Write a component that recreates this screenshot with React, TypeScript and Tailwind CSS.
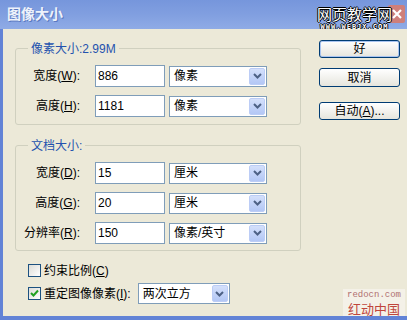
import React from 'react';

const font = "font-['Liberation_Sans','Noto_Sans_CJK_SC',sans-serif]";

const Chevron = () => (
  <svg width="9" height="6" viewBox="0 0 9 6">
    <path d="M1 1 L4.5 4.5 L8 1" fill="none" stroke="#4d6185" strokeWidth="2" />
  </svg>
);

const Select: React.FC<{ value: string; w: string }> = ({ value, w }) => (
  <div className={`${w} h-[21px] flex items-center border border-[#7f9db9] bg-white`}>
    <span className="flex-1 pl-[4px] leading-none">{value}</span>
    <div className="w-[16px] h-[17px] mr-[1px] flex items-center justify-center rounded-[2px] bg-gradient-to-b from-[#d4e0fb] to-[#b3c7f5] border border-[#bccdf6]">
      <Chevron />
    </div>
  </div>
);

const Row: React.FC<{ label: React.ReactNode; value: string; unit: string }> = ({ label, value, unit }) => (
  <div className="flex items-center h-[22px]">
    <div className="w-[64px] text-right">{label}</div>
    <div className="ml-[15px] w-[70px] h-[22px] border border-[#7f9db9] bg-white flex items-center pl-[2px]">{value}</div>
    <div className="ml-[4px]">
      <Select value={unit} w="w-[98px]" />
    </div>
  </div>
);

const Button: React.FC<{ children: React.ReactNode; main?: boolean; h: string; mt: string }> = ({ children, main, h, mt }) => (
  <button
    className={`${h} ${mt} w-[81px] rounded-[3px] border border-[#003c74] bg-gradient-to-b from-white to-[#e6e5dd] flex items-center justify-center ${
      main ? 'shadow-[inset_0_0_0_1px_#a9c4f0]' : ''
    }`}
  >
    {children}
  </button>
);

const Check: React.FC<{ checked?: boolean }> = ({ checked }) => (
  <div className="w-[13px] h-[13px] border border-[#1c5180] bg-gradient-to-br from-[#dcdcd7] to-white flex items-center justify-center">
    {checked && (
      <svg width="9" height="9" viewBox="0 0 9 9">
        <path d="M1 4 L3.5 6.5 L8 1.5" fill="none" stroke="#21a121" strokeWidth="2" />
      </svg>
    )}
  </div>
);

export default function App() {
  return (
    <div className={`w-[407px] h-[320px] flex flex-col overflow-hidden text-[12px] text-black ${font}`}>
      {/* title bar */}
      <div className="relative h-[29px] flex items-center bg-gradient-to-b from-[#7696dc] via-[#819fe0] to-[#8fabe6] pl-[7px]">
        <span className="text-[14px] font-bold text-[#eef2fb] [text-shadow:1px_1px_0_#5a78c0]">图像大小</span>
        <div className="absolute right-[2px] top-[5px] w-[17px] h-[18px] rounded-[2px] bg-[#cf7f7a] flex items-center justify-center">
          <svg width="10" height="10" viewBox="0 0 10 10">
            <path d="M1 1 L9 9 M9 1 L1 9" stroke="#fff" strokeWidth="2.2" />
          </svg>
        </div>
        <div className="absolute right-[15px] top-[5px] flex flex-col items-center">
          <span className="h-[17px] leading-[17px] text-[15px] text-white font-['Noto_Sans_CJK_SC',sans-serif] [text-shadow:1px_0_0_#000,-1px_0_0_#000,0_1px_0_#000,0_-1px_0_#000]">
            网页教学网
          </span>
          <span className="h-[7px] leading-[7px] mt-[2px] text-[7px] font-bold tracking-[1px] text-white font-['DejaVu_Sans_Mono',monospace] [text-shadow:1px_0_0_#000,-1px_0_0_#000,0_1px_0_#000,0_-1px_0_#000]">
            WWW.WEBJX.COM
          </span>
        </div>
      </div>

      {/* body */}
      <div className="relative flex-1 flex bg-[#ece9d8] border-l-[3px] border-b-[4px] border-[#6283d6]">
        <div className="w-[298px] pl-[12px] flex flex-col">
          {/* pixel dimensions */}
          <div className="relative mt-[19px] w-[286px] h-[77px] border border-[#d0d0bf] rounded-[3px] pt-[16px] flex flex-col gap-[8px]">
            <span className="absolute left-[12px] top-[-9px] px-[3px] bg-[#ece9d8] text-[#2452ae]">像素大小:2.99M</span>
            <Row label={<>宽度(<u>W</u>):</>} value="886" unit="像素" />
            <Row label={<>高度(<u>H</u>):</>} value="1181" unit="像素" />
          </div>

          {/* document size */}
          <div className="relative mt-[20px] w-[286px] h-[106px] border border-[#d0d0bf] rounded-[3px] pt-[16px] flex flex-col gap-[8px]">
            <span className="absolute left-[12px] top-[-9px] px-[3px] bg-[#ece9d8] text-[#2452ae]">文档大小:</span>
            <Row label={<>宽度(<u>D</u>):</>} value="15" unit="厘米" />
            <Row label={<>高度(<u>G</u>):</>} value="20" unit="厘米" />
            <Row label={<>分辨率(<u>R</u>):</>} value="150" unit="像素/英寸" />
          </div>

          <div className="mt-[13px] ml-[13px] flex items-center h-[13px] gap-[3px]">
            <Check />
            <span>约束比例(<u>C</u>)</span>
          </div>
          <div className="mt-[6px] ml-[13px] flex items-center h-[21px]">
            <Check checked />
            <span className="ml-[3px]">重定图像像素(<u>I</u>):</span>
            <div className="ml-[7px]">
              <Select value="两次立方" w="w-[92px]" />
            </div>
          </div>
        </div>

        <div className="ml-[18px] flex flex-col">
          <Button main h="h-[18px]" mt="mt-[11px]">好</Button>
          <Button h="h-[19px]" mt="mt-[10px]">取消</Button>
          <Button h="h-[18px]" mt="mt-[15px]">
            自动(<u>A</u>)...
          </Button>
        </div>

        {/* watermark */}
        <div className="absolute right-[2px] bottom-0 w-[62px] h-[27px] bg-[#f4f1e8] flex flex-col items-center pt-[1px]">
          <span className="h-[10px] leading-[10px] text-[9px] text-[#b07070] font-['Liberation_Mono',monospace]">redocn.com</span>
          <span className="h-[14px] leading-[14px] mt-[2px] text-[13px] text-[#c0453c] font-['Noto_Sans_CJK_SC',sans-serif]">红动中国</span>
        </div>
      </div>
    </div>
  );
}
